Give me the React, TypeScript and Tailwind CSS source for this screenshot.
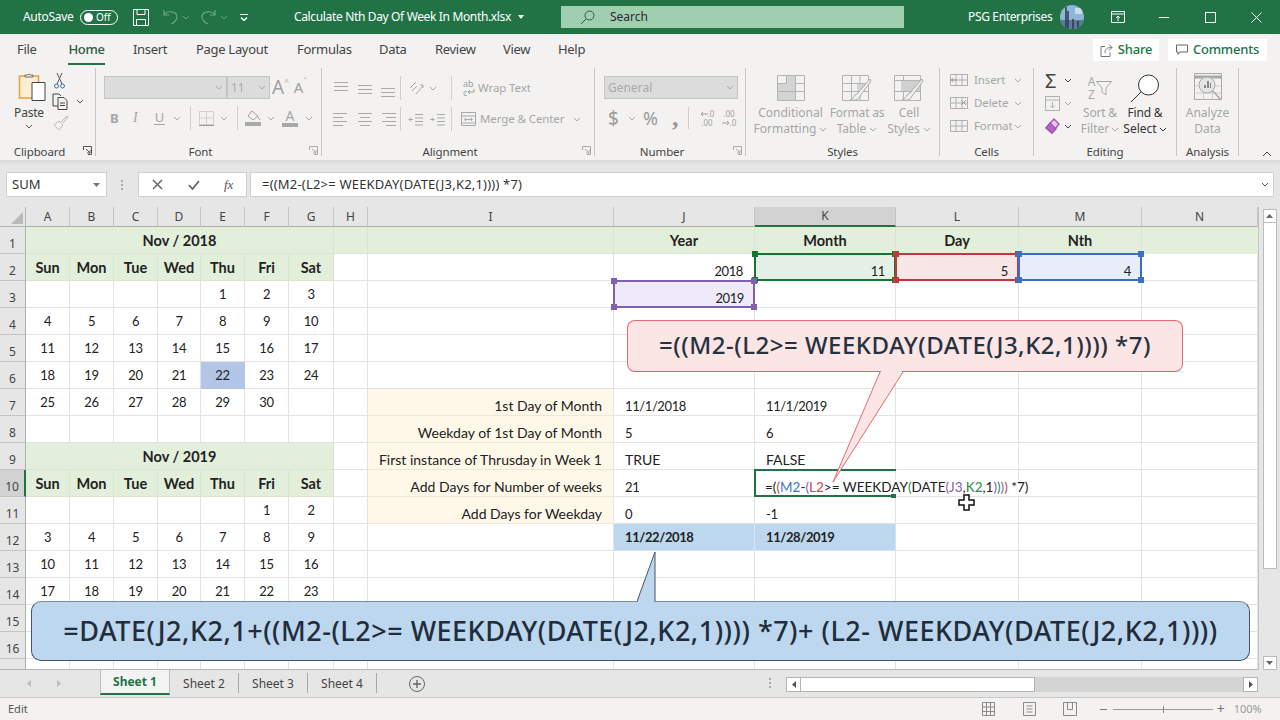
import type { ReactNode } from 'react';

const COLS = ['A', 'B', 'C', 'D', 'E', 'F', 'G', 'H', 'I', 'J', 'K', 'L', 'M', 'N'];
const DIM = '#a9a9a9';

const CAL: Record<number, (string | number)[]> = {
  2: ['Sun', 'Mon', 'Tue', 'Wed', 'Thu', 'Fri', 'Sat'],
  3: ['', '', '', '', 1, 2, 3],
  4: [4, 5, 6, 7, 8, 9, 10],
  5: [11, 12, 13, 14, 15, 16, 17],
  6: [18, 19, 20, 21, 22, 23, 24],
  7: [25, 26, 27, 28, 29, 30, ''],
  10: ['Sun', 'Mon', 'Tue', 'Wed', 'Thu', 'Fri', 'Sat'],
  11: ['', '', '', '', '', 1, 2],
  12: [3, 4, 5, 6, 7, 8, 9],
  13: [10, 11, 12, 13, 14, 15, 16],
  14: [17, 18, 19, 20, 21, 22, 23],
};

const LABELS: Record<number, [string, string, string]> = {
  7: ['1st Day of Month', '11/1/2018', '11/1/2019'],
  8: ['Weekday of 1st Day of Month', '5', '6'],
  9: ['First instance of Thrusday in Week 1', 'TRUE', 'FALSE'],
  10: ['Add Days for Number of weeks', '21', ''],
  11: ['Add Days for Weekday', '0', '-1'],
};

function Chev({ c = DIM, className = '' }: { c?: string; className?: string }) {
  return (
    <svg width="8" height="5" viewBox="0 0 8 5" className={className} fill="none" stroke={c} strokeWidth="1">
      <path d="M1 1l3 3 3-3" />
    </svg>
  );
}

function Launcher({ c = DIM }: { c?: string }) {
  return (
    <svg width="9" height="9" viewBox="0 0 9 9" fill="none" stroke={c} strokeWidth="1">
      <path d="M.5 4V.5h8v8H5M3 3l4 4M7 4v3H4" />
    </svg>
  );
}

function Lines({ w, rows }: { w: number[]; rows: 'top' | 'mid' | 'bot' | 'left' | 'center' | 'right' }) {
  const y = rows === 'top' ? [3, 7, 11] : rows === 'mid' ? [6, 10, 14] : rows === 'bot' ? [9, 13, 17] : [3, 7, 11, 15];
  return (
    <svg width="16" height="19" viewBox="0 0 16 19" fill="none" stroke={DIM} strokeWidth="1">
      {y.map((v, i) => {
        const l = w[i % w.length];
        const x = rows === 'right' ? 16 - l : rows === 'left' ? 0 : (16 - l) / 2;
        return <path key={v} d={`M${x} ${v + 0.5}h${l}`} />;
      })}
    </svg>
  );
}

function TitleBar() {
  return (
    <div className="flex h-[34px] shrink-0 items-center bg-[#217346] text-white">
      <span className="ml-[23px] w-[49px] text-[12px] tracking-[-0.3px]">AutoSave</span>
      <div className="ml-[8px] flex h-[15px] w-[38px] items-center rounded-full border border-white">
        <span className="ml-[3px] h-[9px] w-[9px] rounded-full bg-white" />
        <span className="ml-[3px] text-[10px] leading-none">Off</span>
      </div>
      <svg className="ml-[15px]" width="16" height="17" viewBox="0 0 16 17" fill="none" stroke="#fff" strokeWidth="1">
        <path d="M.5.5h15v16H.5zM4 .5v5h8v-5M3.5 16.5v-6h9v6" />
      </svg>
      <svg className="ml-[14px]" width="15" height="16" viewBox="0 0 15 16" fill="none" stroke="#6aa583" strokeWidth="1.2">
        <path d="M1 1v5h5M1 6c3-5 13-4 13 2 0 3-3 6-6 7" />
      </svg>
      <Chev c="#6aa583" className="ml-[4px]" />
      <svg className="ml-[11px]" width="15" height="16" viewBox="0 0 15 16" fill="none" stroke="#6aa583" strokeWidth="1.2">
        <path d="M14 1v5H9M14 6C11 1 1 2 1 8c0 3 3 6 6 7" />
      </svg>
      <Chev c="#6aa583" className="ml-[4px]" />
      <svg className="ml-[12px]" width="8" height="7" viewBox="0 0 8 7" fill="none" stroke="#fff" strokeWidth="1">
        <path d="M0 .5h8" />
        <path d="M1 3.5l3 3 3-3" strokeWidth="1.3" />
      </svg>
      <span className="ml-[46px] w-[217px] whitespace-nowrap text-[12px] tracking-[-0.35px]">Calculate Nth Day Of Week In Month.xlsx</span>
      <svg className="ml-[7px]" width="6" height="4" viewBox="0 0 6 4" fill="#fff"><path d="M0 0h6L3 4z" /></svg>
      <div className="ml-[37px] flex h-[22px] w-[343px] items-center bg-[#a0cfb0] text-[#2b2b2b]">
        <svg className="ml-[19px]" width="15" height="15" viewBox="0 0 15 15" fill="none" stroke="#35563f" strokeWidth="1">
          <circle cx="9.5" cy="5.5" r="4.5" />
          <path d="M6 9l-5 5" />
        </svg>
        <span className="ml-[15px] text-[12px]">Search</span>
      </div>
      <span className="ml-[64px] w-[81px] whitespace-nowrap text-[12px] tracking-[-0.35px]">PSG Enterprises</span>
      <svg className="ml-[11px]" width="24" height="24" viewBox="0 0 24 24">
        <defs>
          <clipPath id="av"><circle cx="12" cy="12" r="12" /></clipPath>
        </defs>
        <g clipPath="url(#av)">
          <rect width="24" height="24" fill="#8fb6d8" />
          <rect y="15" width="24" height="9" fill="#5d7b99" />
          <path d="M6 2v22M8 6v18M13 14v10M18 16v8" stroke="#2f3f52" strokeWidth="1.6" />
          <path d="M15 3h7v6h-7z" fill="#c9dcec" />
        </g>
      </svg>
      <svg className="ml-[27px]" width="14" height="12" viewBox="0 0 14 12" fill="none" stroke="#fff" strokeWidth="1">
        <path d="M.5 .5h13v11H.5zM.5 3h13M7 10V5M5 7l2-2 2 2" />
      </svg>
      <span className="ml-[34px] h-px w-[10px] bg-white" />
      <span className="ml-[36px] h-[11px] w-[11px] border border-white" />
      <svg className="ml-[35px]" width="11" height="11" viewBox="0 0 11 11" stroke="#fff" strokeWidth="1">
        <path d="M.5.5l10 10M10.5.5l-10 10" />
      </svg>
    </div>
  );
}

function MenuRow() {
  const tabs: [string, number, number][] = [
    ['File', 17, 19],
    ['Home', 68, 37],
    ['Insert', 133, 32],
    ['Page Layout', 196, 71],
    ['Formulas', 297, 53],
    ['Data', 379, 27],
    ['Review', 435, 40],
    ['View', 503, 27],
    ['Help', 558, 26],
  ];
  let at = 0;
  return (
    <div className="flex h-[32px] shrink-0 items-center bg-[#f3f2f1] text-[13px] text-[#444]">
      {tabs.map(([t, x, w]) => {
        const m = x - at;
        at = x + w;
        return (
          <span
            key={t}
            style={{ marginLeft: m, width: w }}
            className={`relative whitespace-nowrap text-center tracking-[-0.3px] ${t === 'Home' ? 'font-medium text-[#2b5b40]' : ''}`}
          >
            {t}
            {t === 'Home' && <span className="absolute -bottom-[5px] left-0 h-[2px] w-full bg-[#217346]" />}
          </span>
        );
      })}
      <div className="ml-auto flex items-center gap-[9px] pr-[13px] text-[#217346]">
        <div className="flex h-[22px] w-[66px] items-center justify-center gap-[5px] bg-white font-medium tracking-[-0.2px]">
          <svg width="13" height="13" viewBox="0 0 13 13" fill="none" stroke="#777" strokeWidth="1">
            <path d="M5 2.5H1v10h9v-4M5 9c0-4 2-5.500 7-5.500M9 .5l3 3-3 3" />
          </svg>
          Share
        </div>
        <div className="flex h-[22px] w-[99px] items-center justify-center gap-[5px] bg-white font-medium tracking-[-0.2px]">
          <svg width="12" height="12" viewBox="0 0 12 12" fill="none" stroke="#666" strokeWidth="1">
            <path d="M.5 1h11v7H4l-2 2.500V8H.5z" />
          </svg>
          Comments
        </div>
      </div>
    </div>
  );
}

function Group({ w, label, launcher, dark, children }: { w: number; label: string; launcher?: boolean; dark?: boolean; children: ReactNode }) {
  return (
    <div style={{ width: w }} className="mt-[2px] flex h-[88px] shrink-0 flex-col border-r border-[#c8c6c4]">
      <div className="h-[79px] overflow-hidden">{children}</div>
      <div className={`relative flex h-[9px] items-center justify-center text-[11.500px] tracking-[-0.1px] text-[#444] ${launcher ? 'pr-[16px]' : ''}`}>
        {label}
        {launcher && (
          <span className="absolute right-[3px] -top-[1px]">
            <Launcher c={dark ? '#555' : DIM} />
          </span>
        )}
      </div>
    </div>
  );
}

function Box({ w, children }: { w: number; children?: ReactNode }) {
  return (
    <div style={{ width: w }} className="flex h-[23px] items-center justify-between border border-[#c4c4c4] bg-[#dcdcdc] px-[3px] text-[12px] text-[#a9a9a9]">
      {children}
    </div>
  );
}

function Sep({ ml = 0, h = 24 }: { ml?: number; h?: number }) {
  return <span style={{ marginLeft: ml, height: h }} className="w-px bg-[#d2d0ce]" />;
}

function Ribbon() {
  return (
    <div className="flex h-[94px] shrink-0 bg-[#f3f2f1] text-[12px] text-[#a6a6a6]">
      <Group w={96} label="Clipboard" launcher dark>
        <div className="flex pl-[14px] pt-[4px]">
          <div className="flex w-[30px] flex-col items-center">
            <svg className="ml-[6px]" width="28" height="30" viewBox="0 0 28 30" fill="none">
              <path d="M1.500 4h19v22h-19z" fill="#fbeed2" stroke="#e8a33d" strokeWidth="1.600" />
              <path d="M7 5V3h2.500a2 2 0 0 1 3 0H15v2z" fill="#fff" stroke="#666" />
              <path d="M14 10.500h13v18H14z" fill="#fff" stroke="#444" />
            </svg>
            <span className="mt-[2px] text-[12px] tracking-[-0.2px] text-[#444]">Paste</span>
            <Chev c="#555" className="mt-[2px]" />
          </div>
          <div className="ml-[8px] flex flex-col pt-[1px]">
            <svg className="ml-[2px]" width="11" height="16" viewBox="0 0 11 16" fill="none" stroke="#555" strokeWidth="1">
              <path d="M3 0l5 11M8 0L3 11" />
              <circle cx="2.500" cy="13" r="2" stroke="#2e75b6" />
              <circle cx="8.500" cy="13" r="2" stroke="#2e75b6" />
            </svg>
            <div className="mt-[4px] flex items-center">
              <svg width="17" height="17" viewBox="0 0 17 17" fill="none" stroke="#444" strokeWidth="1">
                <path d="M6 13H1V1h6l2 2M6 4.500h6l3 3v9H6zM8 10h5M8 12.500h5" />
              </svg>
              <Chev c="#555" className="ml-[7px]" />
            </div>
            <svg className="ml-[1px] mt-[5px]" width="16" height="16" viewBox="0 0 16 16" fill="none" stroke="#bbb" strokeWidth="1">
              <path d="M1 10l5 5 4-5-4-4zM8 7l6-6 1 1-5 6" />
            </svg>
          </div>
        </div>
      </Group>

      <Group w={226} label="Font" launcher>
        <div className="flex pl-[8px] pt-[8px]">
          <Box w={123}>
            <span />
            <Chev />
          </Box>
          <Box w={43}>
            11
            <Chev />
          </Box>
          <span className="ml-[2px] flex h-[23px] items-center text-[19px] leading-none text-[#a0a0a0]">A</span>
          <span className="mb-auto mt-[2px] text-[8px] leading-none">^</span>
          <span className="ml-[5px] flex h-[23px] items-center text-[15px] leading-none text-[#a0a0a0]">A</span>
          <span className="mb-auto mt-[2px] text-[8px] leading-none">ˇ</span>
        </div>
        <div className="mt-[7px] flex h-[24px] items-center pl-[14px]">
          <span className="w-[10px] text-[13px] font-bold leading-none">B</span>
          <span className="ml-[13px] w-[9px] font-['Liberation_Serif',serif] text-[14px] italic leading-none">I</span>
          <span className="ml-[12px] w-[11px] border-b border-[#a6a6a6] text-center text-[13px] leading-[13px]">U</span>
          <Chev className="ml-[8px]" />
          <Sep ml={9} />
          <svg className="ml-[8px]" width="15" height="15" viewBox="0 0 15 15" fill="none" stroke="#b5b5b5" strokeWidth="1" strokeDasharray="1 1">
            <path d="M.5.5h14v13H.5zM7.500.5v13M.5 7h14" />
            <path d="M0 14.500h15" strokeDasharray="none" stroke="#999" />
          </svg>
          <Chev className="ml-[6px]" />
          <Sep ml={9} />
          <div className="ml-[7px] flex flex-col items-center">
            <svg width="16" height="11" viewBox="0 0 16 11" fill="none" stroke="#a0a0a0"><path d="M7 1l6 5-5 4-5-4zM13 7l2 3" /></svg>
            <span className="mt-[1px] h-[4px] w-[16px] bg-[#a8a8a8]" />
          </div>
          <Chev className="ml-[6px]" />
          <div className="ml-[7px] flex flex-col items-center">
            <span className="text-[14px] leading-[12px]">A</span>
            <span className="mt-[1px] h-[4px] w-[16px] bg-[#a8a8a8]" />
          </div>
          <Chev className="ml-[7px]" />
        </div>
      </Group>

      <Group w={273} label="Alignment" launcher>
        <div className="flex h-[36px] items-center pl-[11px] pt-[4px]">
          <Lines w={[14]} rows="top" />
          <span className="ml-[8px]"><Lines w={[14]} rows="mid" /></span>
          <span className="ml-[7px]"><Lines w={[14]} rows="bot" /></span>
          <Sep ml={4} />
          <svg className="ml-[7px]" width="17" height="17" viewBox="0 0 17 17" fill="none" stroke={DIM}>
            <path d="M2 8l6-6M4 11l5-5M8 14l7-8M12 5h3v3" />
          </svg>
          <Chev className="ml-[4px]" />
          <Sep ml={14} />
          <div className="ml-[11px] flex w-[14px] flex-col text-[9px] leading-[9px] text-[#a0a0a0]">
            <span>ab</span>
            <div className="flex h-[9px] items-center">
              <span>c</span>
              <svg width="8" height="7" viewBox="0 0 8 7" fill="none" stroke="#a0a0a0"><path d="M7 0v3H1M3 1L1 3l2 2" /></svg>
            </div>
          </div>
          <span className="ml-[1px] whitespace-nowrap text-[11.500px] tracking-[-0.1px]">Wrap Text</span>
        </div>
        <div className="flex h-[30px] items-center pl-[11px]">
          <Lines w={[14, 10]} rows="left" />
          <span className="ml-[8px]"><Lines w={[14, 10]} rows="center" /></span>
          <span className="ml-[7px]"><Lines w={[14, 10]} rows="right" /></span>
          <Sep ml={4} />
          <svg className="ml-[7px]" width="15" height="15" viewBox="0 0 15 15" fill="none" stroke={DIM}>
            <path d="M7 2.500h8M7 6h8M7 9.500h8M7 13h8M5 7.500H1M3 5.500l-2 2 2 2" />
          </svg>
          <svg className="ml-[7px]" width="15" height="15" viewBox="0 0 15 15" fill="none" stroke={DIM}>
            <path d="M7 2.500h8M7 6h8M7 9.500h8M7 13h8M0 7.500h4M2 5.500l2 2-2 2" />
          </svg>
          <Sep ml={6} />
          <svg className="ml-[9px]" width="16" height="16" viewBox="0 0 16 16" fill="none" stroke={DIM}>
            <path d="M.5 1.500h14v13H.5zM.5 5h14M.5 12h14M4 8.500h7M5 7L3.500 8.500 5 10M10 7l1.500 1.500L10 10" />
          </svg>
          <span className="ml-[3px] w-[86px] whitespace-nowrap text-[11.500px] tracking-[-0.1px]">Merge &amp; Center</span>
          <Chev className="ml-[7px]" />
        </div>
      </Group>

      <Group w={151} label="Number" launcher>
        <div className="pl-[9px] pt-[8px]">
          <Box w={134}>
            General
            <Chev />
          </Box>
        </div>
        <div className="mt-[6px] flex h-[26px] items-center pl-[13px]">
          <span className="w-[12px] text-[19px] leading-none text-[#999]">$</span>
          <Chev className="ml-[8px]" />
          <span className="ml-[7px] w-[18px] text-[18px] leading-none text-[#999]">%</span>
          <span className="ml-[11px] w-[6px] font-['Liberation_Serif',serif] text-[26px] font-bold leading-[14px] text-[#999]">,</span>
          <Sep ml={10} h={22} />
          <div className="ml-[9px] flex w-[18px] flex-col items-center text-[8px] leading-[9px] text-[#a0a0a0]">
            <div className="flex items-center">
              <svg width="8" height="6" viewBox="0 0 8 6" fill="none" stroke="#a0a0a0"><path d="M8 3H1M3 1L1 3l2 2" /></svg>
              <span>.0</span>
            </div>
            <span>.00</span>
          </div>
          <div className="ml-[4px] flex w-[18px] flex-col items-center text-[8px] leading-[9px] text-[#a0a0a0]">
            <span>.00</span>
            <div className="flex items-center">
              <svg width="8" height="6" viewBox="0 0 8 6" fill="none" stroke="#a0a0a0"><path d="M0 3h7M5 1l2 2-2 2" /></svg>
              <span>.0</span>
            </div>
          </div>
        </div>
      </Group>

      <Group w={194} label="Styles">
        <div className="flex pl-[3px] pt-[7px] text-center leading-[16px]">
          <div className="flex w-[83px] flex-col items-center">
            <svg width="28" height="26" viewBox="0 0 28 26" fill="none" stroke="#b3b3b3">
              <path d="M.5.500h27v25H.5zM.5 8.500h27M.5 16.500h27M9.500.5v25M18.500.5v25" />
              <path d="M1 9h9v7H1zM10 1h8v15h-8zM1 17h17v8H1z" fill="#d4d4d4" stroke="none" />
            </svg>
            <span className="mt-[4px] whitespace-nowrap">Conditional</span>
            <span className="flex items-center gap-[3px] whitespace-nowrap">Formatting <Chev /></span>
          </div>
          <div className="flex w-[50px] flex-col items-center">
            <svg width="30" height="26" viewBox="0 0 30 26" fill="none" stroke="#b3b3b3">
              <path d="M.5.500h26v25H.5zM.5 8.500h26M.5 16.500h26M9.500.5v25M18 .5v25" />
              <path d="M15 9h8v7h-8z" fill="#d4d4d4" stroke="none" />
              <path d="M28 4L16 18l-3 2c-1 2-2 4-5 5 6 1 9-1 10-4L29 6z" fill="#f3f2f1" stroke="#aaa" />
            </svg>
            <span className="mt-[4px] whitespace-nowrap tracking-[-0.2px]">Format as</span>
            <span className="flex items-center gap-[3px]">Table <Chev /></span>
          </div>
          <div className="flex w-[54px] flex-col items-center">
            <svg width="30" height="26" viewBox="0 0 30 26" fill="none" stroke="#b3b3b3">
              <path d="M.5.500h26v25H.5zM.5 5.500h26M.5 16.500h26M9.500.5v25" />
              <path d="M7 6h19v10H7z" fill="#d0d0d0" stroke="none" />
              <path d="M28 4L16 18l-3 2c-1 2-2 4-5 5 6 1 9-1 10-4L29 6z" fill="#f3f2f1" stroke="#aaa" />
            </svg>
            <span className="mt-[4px]">Cell</span>
            <span className="flex items-center gap-[3px]">Styles <Chev /></span>
          </div>
        </div>
      </Group>

      <Group w={94} label="Cells">
        <div className="flex flex-col gap-[7px] pl-[10px] pt-[4px] tracking-[-0.1px]">
          {['Insert', 'Delete', 'Format'].map((t, i) => (
            <div key={t} className="flex h-[16px] items-center">
              <svg width="18" height="16" viewBox="0 0 18 16" fill="none" stroke="#b0b0b0">
                <path d="M.5 2.500h17v11H.5zM.5 8h17M6 2.500v11M12 2.500v11" />
                {i === 1 && <path d="M11 5l5 5M16 5l-5 5" stroke="#999" />}
                {i === 0 && <path d="M7 8H1M3 6L1 8l2 2" stroke="#999" />}
              </svg>
              <span className="ml-[6px] w-[37px] text-[11.500px]">{t}</span>
              <Chev className="ml-[3px]" />
            </div>
          ))}
        </div>
      </Group>

      <Group w={143} label="Editing">
        <div className="flex pl-[11px]">
          <div className="flex w-[30px] flex-col pt-[3px]">
            <div className="flex h-[19px] items-center">
              <span className="w-[15px] text-[20px] leading-none text-[#444]">Σ</span>
              <Chev c="#444" className="ml-[4px]" />
            </div>
            <div className="mt-[4px] flex h-[19px] items-center">
              <svg width="15" height="15" viewBox="0 0 15 15" fill="none" stroke="#b0b0b0">
                <path d="M.5.5h14v14H.5zM.5 4h14M7.500 6v6M5 9.500l2.500 2.500L10 9.500" />
              </svg>
              <Chev className="ml-[4px]" />
            </div>
            <div className="mt-[4px] flex h-[19px] items-center">
              <svg width="15" height="17" viewBox="0 0 15 17" fill="#e8c6ec" stroke="#a64fb5" strokeWidth="1.300">
                <path d="M9 1l5 5-7 9-6-5z" />
                <path d="M1 10l4-5 6 6-4 4z" fill="#b565c2" />
              </svg>
              <Chev c="#444" className="ml-[4px]" />
            </div>
          </div>
          <div className="ml-[2px] flex w-[46px] flex-col items-center pt-[7px] text-center leading-[16px]">
            <div className="flex h-[26px] items-center">
              <div className="flex flex-col text-[12px] leading-[13px] text-[#a8a8a8]">
                <span>A</span>
                <span>Z</span>
              </div>
              <svg className="ml-[1px]" width="16" height="16" viewBox="0 0 16 16" fill="none" stroke="#a8a8a8">
                <path d="M.5 1.500h15L10 8v7l-4-3V8z" />
              </svg>
            </div>
            <span className="mt-[4px] whitespace-nowrap tracking-[-0.2px]">Sort &amp;</span>
            <span className="flex items-center gap-[2px]">Filter <Chev /></span>
          </div>
          <div className="flex w-[44px] flex-col items-center pt-[6px] text-center leading-[16px] text-[#333]">
            <svg width="30" height="28" viewBox="0 0 30 28" fill="#fff" stroke="#333">
              <circle cx="18.500" cy="11" r="10" />
              <path d="M11 18L1 28" />
            </svg>
            <span className="mt-[3px] whitespace-nowrap tracking-[-0.2px]">Find &amp;</span>
            <span className="flex items-center gap-[2px]">Select <Chev c="#333" /></span>
          </div>
        </div>
      </Group>

      <Group w={62} label="Analysis">
        <div className="flex flex-col items-center pt-[5px] text-center leading-[16px]">
          <svg width="28" height="29" viewBox="0 0 28 29" fill="none" stroke="#a8a8a8">
            <path d="M.5.500h27v26H.5z" />
            <path d="M.5 4h27" strokeWidth="3" />
            <path d="M.5 13h27M.5 20h27M9.500 4v23M18.500 4v23" stroke="#ccc" />
            <circle cx="13" cy="12" r="8" fill="#e6e5e4" />
            <path d="M10 15v-3h2v3zm3 0V8h2v7zm3 0v-5h1v5z" fill="#888" stroke="none" />
            <path d="M19 18l8 9" strokeWidth="1.500" />
          </svg>
          <span className="mt-[3px]">Analyze</span>
          <span>Data</span>
        </div>
      </Group>

      <div className="flex flex-1 items-end justify-center pb-[3px] pl-[14px]">
        <svg width="10" height="6" viewBox="0 0 10 6" fill="none" stroke="#444">
          <path d="M1 5l4-4 4 4" />
        </svg>
      </div>
    </div>
  );
}

function FormulaBar() {
  return (
    <div className="h-[47px] shrink-0 bg-[linear-gradient(#d9d9d9,#e6e6e6_5px)] pt-[12px]">
      <div className="flex h-[25px] items-stretch text-[13px] text-[#333]">
        <div className="ml-[6px] flex w-[101px] items-center justify-between border border-[#d0d0d0] bg-white pl-[5px] pr-[6px]">
          SUM
          <svg width="7" height="4" viewBox="0 0 7 4" fill="#777"><path d="M0 0h7L3.500 4z" /></svg>
        </div>
        <div className="ml-[14px] flex flex-col justify-center gap-[2px]">
          <span className="h-[2px] w-[2px] bg-[#aaa]" />
          <span className="h-[2px] w-[2px] bg-[#aaa]" />
          <span className="h-[2px] w-[2px] bg-[#aaa]" />
        </div>
        <div className="ml-[15px] flex w-[109px] items-center border border-[#d0d0d0] bg-white">
          <svg className="ml-[13px]" width="11" height="11" viewBox="0 0 11 11" stroke="#666" strokeWidth="1.500"><path d="M1 1l9 9M10 1l-9 9" /></svg>
          <svg className="ml-[25px]" width="12" height="10" viewBox="0 0 12 10" fill="none" stroke="#666" strokeWidth="1.800"><path d="M1 5l3.500 4L11 1" /></svg>
          <span className="ml-[24px] font-['Liberation_Serif',serif] text-[13px] italic text-[#555]">fx</span>
        </div>
        <div className="ml-[3px] flex w-[1024px] items-center justify-between border border-[#d0d0d0] bg-white pl-[11px] pr-[4px]">
          <span className="tracking-[0.2px]">{'=((M2-(L2>= WEEKDAY(DATE(J3,K2,1)))) *7)'}</span>
          <Chev c="#555" />
        </div>
      </div>
    </div>
  );
}

function Handle({ c, pos }: { c: string; pos: string }) {
  return <span className={`absolute z-10 h-[6px] w-[6px] ${c} ${pos}`} />;
}

function RefBox({ border, bg, dot, children }: { border: string; bg: string; dot: string; children: ReactNode }) {
  return (
    <div className={`absolute -inset-px z-10 flex items-end justify-end border-2 pb-[1px] pr-[9px] text-[13px] leading-[14px] tracking-[-0.4px] ${border} ${bg}`}>
      {children}
      <Handle c={dot} pos="-left-[4px] -top-[4px]" />
      <Handle c={dot} pos="-right-[4px] -top-[4px]" />
      <Handle c={dot} pos="-left-[4px] -bottom-[4px]" />
      <Handle c={dot} pos="-right-[4px] -bottom-[4px]" />
    </div>
  );
}

function EditCell() {
  return (
    <div className="absolute -left-px -top-px z-10 h-[28px] w-[142px] border-y-2 border-l-2 border-[#217346]">
      <span className="absolute left-[9px] top-[9px] whitespace-nowrap bg-white text-[13.500px] leading-[15px]">
        =(<span className="text-[#c04a50]">(</span>
        <span className="text-[#3f75c6]">M2</span>-
        <span className="text-[#7e5fb0]">(</span>
        <span className="text-[#c04a50]">L2</span>{'>= WEEKDAY'}
        <span className="text-[#2b8a4a]">(</span>DATE
        <span className="text-[#7e5fb0]">(J3</span>,
        <span className="text-[#2b8a4a]">K2</span>,1
        <span className="text-[#7e5fb0]">)</span>
        <span className="text-[#2b8a4a]">)</span>
        <span className="text-[#7e5fb0]">)</span>
        <span className="text-[#c04a50]">)</span> *7)
      </span>
      <span className="absolute -bottom-[3px] right-0 h-[4px] w-[5px] bg-[#217346]" />
    </div>
  );
}

function Cell({ r, c }: { r: number; c: string }) {
  const i = COLS.indexOf(c);
  const base = 'relative flex min-w-0 border-r border-b whitespace-nowrap';
  let line = 'border-[#e2e2e2]';
  let tone = '';
  let body: ReactNode = null;

  if (i < 7 && CAL[r]) {
    const v = CAL[r][i];
    const bold = r === 2 || r === 10;
    body = v;
    tone = `items-center justify-center ${bold ? 'pt-[2px] text-[14.500px] font-bold' : 'pt-[1px]'}`;
    if (bold) {
      tone += ' bg-[#e2efda]';
      line = 'border-[#d8e6cf]';
    }
    if (r === 6 && c === 'E') {
      tone += ' bg-[#b4c6e7]';
      line = 'border-[#b4c6e7]';
    }
  }
  if (r === 1 && i >= 7) {
    tone = 'items-center justify-center pt-[2px] text-[14.500px] font-bold bg-[#e2efda]';
    line = 'border-[#d8e6cf]';
    body = { J: 'Year', K: 'Month', L: 'Day', M: 'Nth' }[c] ?? '';
    if (c === 'N') line = 'border-[#e2efda]';
  }
  if (LABELS[r] && i >= 8 && i <= 10) {
    const [a, b, d] = LABELS[r];
    if (c === 'I') {
      tone = 'items-end justify-end pr-[11px] pb-[2px] leading-[14px] bg-[#fff8e9]';
      line = 'border-[#ede8da]';
      body = a;
    } else {
      tone = 'items-end pl-[11px] pb-[2px] leading-[14px]';
      body = c === 'J' ? b : d;
    }
  }
  if (r === 12 && (c === 'J' || c === 'K')) {
    tone = 'items-center pl-[11px] pt-[1px] font-bold bg-[#bdd7ee]';
    line = 'border-[#d2e3f2]';
    body = c === 'J' ? '11/22/2018' : '11/28/2019';
  }
  if (r === 2 && c === 'J') {
    tone = 'items-end justify-end pr-[11px] pb-[2px] leading-[14px]';
    body = '2018';
  }
  const numeric = typeof body === 'number' || (typeof body === 'string' && /^[-\d/]+$/.test(body));
  return (
    <div className={`${base} ${line} ${tone} ${numeric ? 'text-[13px] tracking-[-0.4px]' : ''}`}>
      {body}
      {r === 2 && c === 'K' && <RefBox border="border-[#13782f]" bg="bg-[#e6f0e6]" dot="bg-[#13782f]">11</RefBox>}
      {r === 2 && c === 'L' && <RefBox border="border-[#c0383f]" bg="bg-[#f9e6e6]" dot="bg-[#c0383f]">5</RefBox>}
      {r === 2 && c === 'M' && <RefBox border="border-[#3a6fc4]" bg="bg-[#e8eef9]" dot="bg-[#3a6fc4]">4</RefBox>}
      {r === 3 && c === 'J' && <RefBox border="border-[#7e5fb0]" bg="bg-[#efeafa]" dot="bg-[#7e5fb0]">2019</RefBox>}
      {r === 10 && c === 'K' && <EditCell />}
    </div>
  );
}

function Sheet() {
  const rows = Array.from({ length: 17 }, (_, k) => k + 1);
  return (
    <div className="relative h-[463px] w-[1258px] overflow-hidden border-b border-[#b4b4b4] bg-white">
      <div className="grid grid-cols-[26px_44px_44px_44px_43px_44px_44px_45px_34px_246px_141px_141px_123px_123px_116px] grid-rows-[20px_repeat(16,27px)_11px] font-['Lato',sans-serif] text-[14px] text-[#222]">
        <div className="flex items-end justify-end border-b border-r border-[#b4b4b4] bg-[#e6e6e6] p-[2px]">
          <svg width="12" height="12" viewBox="0 0 12 12" fill="#b9b9b9"><path d="M12 0v12H0z" /></svg>
        </div>
        {COLS.map((c) => (
          <div
            key={c}
            className={`flex items-center justify-center border-r font-['Noto_Sans',sans-serif] text-[12px] text-[#444] ${
              c === 'K' ? 'border-b-2 border-b-[#217346] border-r-[#c4c4c4] bg-[#d2d2d2]' : 'border-b border-b-[#a8b0a8] border-r-[#c4c4c4] bg-[#e6e6e6]'
            }`}
          >
            {c}
          </div>
        ))}
        {rows.map((r) => (
          <div key={r} className="contents">
            <div
              className={`flex items-end justify-center font-['Noto_Sans',sans-serif] text-[12px] text-[#444] ${
                r === 10 ? 'border-b border-r-2 border-b-[#c4c4c4] border-r-[#217346] bg-[#d2d2d2]' : 'border-b border-r border-b-[#c4c4c4] border-r-[#a8b0a8] bg-[#e6e6e6]'
              }`}
            >
              {r < 17 ? r : ''}
            </div>
            {r === 1 || r === 9 ? (
              <div className="col-span-7 flex items-center justify-center border-b border-r border-[#d8e6cf] bg-[#e2efda] pt-[1px] text-[14.500px] font-bold">
                {r === 1 ? 'Nov / 2018' : 'Nov / 2019'}
              </div>
            ) : null}
            {COLS.filter((c, i) => !((r === 1 || r === 9) && i < 7)).map((c) => (
              <Cell key={c} r={r} c={c} />
            ))}
          </div>
        ))}
      </div>

      {/* Callouts */}
      <div className="absolute left-[627px] top-[113px] z-20 flex h-[52px] w-[556px] items-center justify-center rounded-[8px] border border-[#e46a72] border-b-[#d9646c] bg-[#fbe5e5] pb-[2px] text-[24px] font-medium tracking-[0.5px] text-[#26323f]">
        {'=((M2-(L2>= WEEKDAY(DATE(J3,K2,1)))) *7)'}
      </div>
      <svg className="absolute left-0 top-0 z-20" width="1258" height="463" fill="none">
        <path d="M880 165L833 275L903 165" fill="#fbe5e5" stroke="#e46a72" />
        <path d="M881 165h21" stroke="#fbe5e5" strokeWidth="2" />
        <path d="M637 394.500L655 345V395" fill="#bdd7ee" stroke="#44546a" />
      </svg>
      <div className="absolute left-[31px] top-[394px] z-20 flex h-[60px] w-[1219px] items-center justify-center rounded-[10px] border border-[#44546a] border-t-[#7f8b97] bg-[#bdd7ee] text-[27px] font-medium tracking-[0.5px] text-[#1f2d3d]">
        {'=DATE(J2,K2,1+((M2-(L2>= WEEKDAY(DATE(J2,K2,1)))) *7)+ (L2- WEEKDAY(DATE(J2,K2,1))))'}
      </div>
      <span className="absolute left-[638px] top-[393px] z-20 h-[3px] w-[16px] bg-[#bdd7ee]" />

      {/* Mouse pointer */}
      <svg className="absolute left-[958px] top-[287px] z-30" width="17" height="17" viewBox="0 0 17 17" fill="#fff" stroke="#111" strokeWidth="1.500">
        <path d="M6 1h5v5h5v5h-5v5H6v-5H1V6h5z" />
      </svg>
    </div>
  );
}

function VScroll() {
  return (
    <div className="flex h-[463px] w-[22px] flex-col items-center border-l border-[#c4c4c4] bg-[#e6e6e6] pt-[2px]">
      <div className="flex h-[14px] w-[14px] items-center justify-center border border-[#bcbcbc] bg-white">
        <svg width="7" height="4" viewBox="0 0 7 4" fill="#666"><path d="M0 4h7L3.500 0z" /></svg>
      </div>
      <div className="h-[346px] w-[14px] border-x border-b border-[#bcbcbc] bg-white" />
      <div className="flex-1" />
      <div className="flex h-[14px] w-[14px] items-center justify-center border border-[#bcbcbc] bg-white">
        <svg width="7" height="4" viewBox="0 0 7 4" fill="#666"><path d="M0 0h7L3.500 4z" /></svg>
      </div>
    </div>
  );
}

function TabsBar() {
  return (
    <div className="flex h-[28px] shrink-0 items-start border-b border-[#c8c8c8] bg-[#e6e6e6] text-[12px] text-[#444]">
      <svg className="ml-[27px] mt-[10px]" width="4" height="7" viewBox="0 0 4 7" fill="#bbb"><path d="M4 0v7L0 3.500z" /></svg>
      <svg className="ml-[26px] mt-[10px]" width="4" height="7" viewBox="0 0 4 7" fill="#bbb"><path d="M0 0v7l4-3.500z" /></svg>
      <div className="ml-[39px] flex h-[25px] w-[70px] items-center justify-center border-x border-b-2 border-x-[#bdbdbd] border-b-[#217346] bg-[#f3f3f3] pt-[1px] font-bold text-[#217346]">
        Sheet 1
      </div>
      {['Sheet 2', 'Sheet 3', 'Sheet 4'].map((s) => (
        <div key={s} className="mt-[3px] flex h-[20px] w-[69px] items-center justify-center border-r border-[#a8a8a8] pt-[1px]">
          {s}
        </div>
      ))}
      <svg className="ml-[32px] mt-[6px]" width="16" height="16" viewBox="0 0 16 16" fill="none" stroke="#666">
        <circle cx="8" cy="8" r="7.500" />
        <path d="M4 8h8M8 4v8" strokeWidth="1.400" />
      </svg>
      <div className="ml-[344px] mt-[8px] flex flex-col gap-[2px]">
        <span className="h-[2px] w-[2px] bg-[#aaa]" />
        <span className="h-[2px] w-[2px] bg-[#aaa]" />
        <span className="h-[2px] w-[2px] bg-[#aaa]" />
      </div>
      <div className="ml-[15px] mt-[7px] flex h-[15px] w-[472px] bg-[#d4d4d4]">
        <div className="flex w-[15px] items-center justify-center border border-[#b4b4b4] bg-white">
          <svg width="4" height="7" viewBox="0 0 4 7" fill="#555"><path d="M4 0v7L0 3.500z" /></svg>
        </div>
        <div className="w-[234px] border-y border-r border-[#b4b4b4] bg-white" />
        <div className="ml-auto flex w-[15px] items-center justify-center border border-[#b4b4b4] bg-white">
          <svg width="4" height="7" viewBox="0 0 4 7" fill="#555"><path d="M0 0v7l4-3.500z" /></svg>
        </div>
      </div>
    </div>
  );
}

function StatusBar() {
  return (
    <div className="flex h-[22px] shrink-0 items-center bg-[#f3f2f1] text-[11px] text-[#555]">
      <span className="ml-[8px]">Edit</span>
      <svg className="ml-[954px]" width="13" height="14" viewBox="0 0 13 14" fill="none" stroke="#8a8a8a">
        <path d="M.5.500h12v13H.5zM.5 5h12M.5 9.500h12M4.500.5v13M8.500.5v13" />
      </svg>
      <svg className="ml-[28px]" width="13" height="14" viewBox="0 0 13 14" fill="none" stroke="#8a8a8a">
        <path d="M.5.500h12v13H.5zM3.500 4h6M3.500 7h6M3.500 10h6" />
      </svg>
      <svg className="ml-[27px]" width="14" height="14" viewBox="0 0 14 14" fill="none" stroke="#8a8a8a">
        <path d="M.5.500h13v13H.5zM4.500.5v7h5v-7" />
      </svg>
      <span className="ml-[23px] h-px w-[7px] bg-[#777]" />
      <div className="relative ml-[6px] h-px w-[100px] bg-[#999]">
        <span className="absolute left-[50px] top-[-3px] h-[7px] w-px bg-[#888]" />
      </div>
      <span className="ml-[4px] text-[14px] leading-none text-[#777]">+</span>
      <span className="ml-[9px] text-[11px] text-[#999]">100%</span>
    </div>
  );
}

export default function App() {
  return (
    <div className="flex h-[720px] w-[1280px] flex-col overflow-hidden bg-[#f3f2f1] font-['Noto_Sans',sans-serif]">
      <TitleBar />
      <MenuRow />
      <Ribbon />
      <FormulaBar />
      <div className="flex shrink-0">
        <Sheet />
        <VScroll />
      </div>
      <TabsBar />
      <StatusBar />
    </div>
  );
}
